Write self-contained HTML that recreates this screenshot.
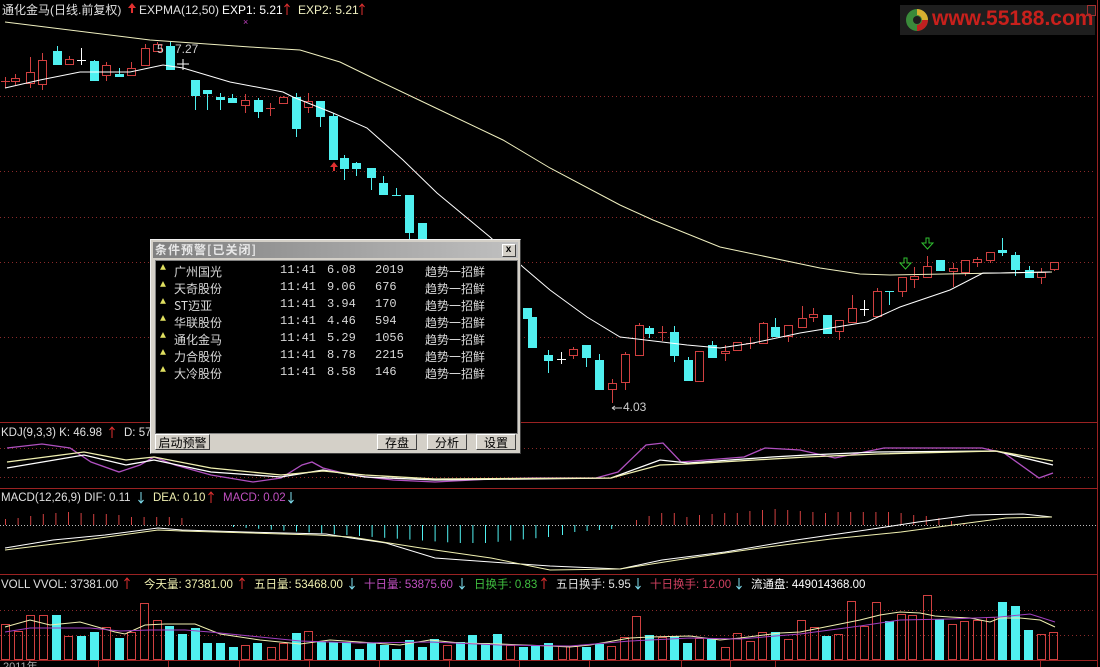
<!DOCTYPE html>
<html><head><meta charset="utf-8">
<style>
html,body{margin:0;padding:0;background:#000;overflow:hidden}
#w{position:relative;width:1100px;height:667px;background:#000;font-family:"Liberation Sans","Noto Sans CJK SC",sans-serif}
svg{position:absolute;left:0;top:0}
.dlg{position:absolute;left:150px;top:239px;width:371px;height:215px;background:#d4d0c8;border:1px solid #f0f0f0;border-right-color:#404040;border-bottom-color:#404040;box-sizing:border-box}
.tt{position:absolute;left:2px;top:2px;right:2px;height:16px;background:linear-gradient(90deg,#808080,#c0c0c0);color:#e8e8e8;font:bold 12px "Noto Sans CJK SC",sans-serif;line-height:16px;padding-left:2px;letter-spacing:1px}
.x{position:absolute;right:2px;top:2px;width:12px;height:11px;background:#d4d0c8;border:1px solid #fff;border-right-color:#404040;border-bottom-color:#404040;font:bold 10px "Liberation Sans",sans-serif;line-height:10px;text-align:center;color:#000}
.body{position:absolute;left:4px;top:20px;width:361px;height:172px;background:#000;border:1px solid #808080}
.row{position:absolute;left:0;height:17px;font:12px "Liberation Mono","Noto Sans CJK SC",monospace;color:#d8d8d8;white-space:nowrap}
.row span{position:absolute;top:0}
.btn{position:absolute;top:194px;height:16px;background:#d4d0c8;border:1px solid #fff;border-right-color:#404040;border-bottom-color:#404040;font:12px "Noto Sans CJK SC",sans-serif;line-height:16px;text-align:center;color:#000;box-sizing:border-box}
.logo{position:absolute;left:900px;top:5px;width:195px;height:30px;background:#1e1e1e}
.logo b{position:absolute;left:32px;top:2px;font:bold 21px "Liberation Sans",sans-serif;color:#c8201c;letter-spacing:0px}
</style></head><body><div id="w">
<svg id="s" width="1100" height="667" xmlns="http://www.w3.org/2000/svg" font-family="Liberation Sans, Noto Sans CJK SC, sans-serif" font-size="12">
<g stroke="#8a2a2a" stroke-dasharray="1,3" stroke-width="1">
<line x1="0" y1="96.5" x2="1096" y2="96.5"/><line x1="0" y1="171.5" x2="1096" y2="171.5"/><line x1="0" y1="217.5" x2="1096" y2="217.5"/><line x1="0" y1="262.5" x2="1096" y2="262.5"/><line x1="0" y1="337.5" x2="1096" y2="337.5"/>
<line x1="0" y1="448.5" x2="1096" y2="448.5"/><line x1="0" y1="477.5" x2="1096" y2="477.5"/>
<line x1="0" y1="610.5" x2="1096" y2="610.5"/><line x1="0" y1="635.5" x2="1096" y2="635.5"/>
</g>
<line x1="0" y1="525.5" x2="1096" y2="525.5" stroke="#bbb" stroke-dasharray="1,2"/>
<g stroke="#9a2222" stroke-width="1">
<line x1="0" y1="422.5" x2="1098" y2="422.5"/><line x1="0" y1="488.5" x2="1098" y2="488.5"/><line x1="0" y1="574.5" x2="1098" y2="574.5"/><line x1="0" y1="660.5" x2="1098" y2="660.5"/><line x1="1097.5" y1="0" x2="1097.5" y2="667"/>
</g>
<g stroke="#9a2222"><line x1="98.5" y1="660" x2="98.5" y2="667"/><line x1="168.5" y1="660" x2="168.5" y2="667"/><line x1="239.5" y1="660" x2="239.5" y2="667"/><line x1="309.5" y1="660" x2="309.5" y2="667"/><line x1="379.5" y1="660" x2="379.5" y2="667"/><line x1="449.5" y1="660" x2="449.5" y2="667"/><line x1="519.5" y1="660" x2="519.5" y2="667"/><line x1="589.5" y1="660" x2="589.5" y2="667"/><line x1="681.5" y1="660" x2="681.5" y2="667"/><line x1="730.5" y1="660" x2="730.5" y2="667"/><line x1="775.5" y1="660" x2="775.5" y2="667"/><line x1="1040.5" y1="660" x2="1040.5" y2="667"/></g>
<text x="3" y="670" fill="#aaa" font-size="11">2011年</text>
<g id="vol"></g><g id="macd"></g><g id="cand"></g>
<polyline fill="none" stroke="#f0f0c0" stroke-width="1" points="5,22 150,40 250,47 300,50 340,62 377,80 440,110 503,140 550,168 620,205 653,220 720,247 820,268 860,274 890,275 1000,273 1052,272"/>
<polyline fill="none" stroke="#fff" stroke-width="1" points="5,88 40,80 80,72 130,72 163,65 183,68 230,82 283,92 293,97 333,113 367,128 403,160 437,193 490,237 523,267 550,290 587,317 620,337 687,345 720,348 753,343 800,333 867,322 900,307 950,290 983,273 1000,273 1050,272"/>
<polyline fill="none" stroke="#b050c0" stroke-width="1.3" points="7,448 42,444 70,448 91,462 119,472 140,465 154,457 175,465 211,475 253,482 281,478 302,465 312,462 323,468 351,475 393,480 435,482 491,479 533,478 596,478 618,472 646,445 663,443 681,462 744,457 765,448 800,450 835,458 884,448 982,448 1004,453 1039,478 1053,473"/>
<polyline fill="none" stroke="#fff" stroke-width="1.3" points="7,468 84,455 126,465 154,460 211,472 281,477 323,470 365,477 435,480 611,478 660,460 688,463 772,457 807,455 877,452 996,451 1053,465"/>
<polyline fill="none" stroke="#f0f0b0" stroke-width="1.3" points="7,462 84,452 126,460 154,457 211,468 281,475 323,471 365,475 435,479 611,478 660,465 688,464 772,459 807,457 877,454 996,451 1053,461"/>
<polyline fill="none" stroke="#fff" points="5,548 53,540 105,535 158,528 182,530 245,532 326,534 351,538 386,543 435,558 491,562 550,566 620,569 662,560 725,552 796,540 866,530 918,522 971,515 1023,514 1052,517"/>
<polyline fill="none" stroke="#f0f0b0" points="5,550 70,542 158,530 182,531 316,535 351,537 421,548 491,558 550,570 620,569 690,558 760,548 831,539 901,532 953,525 1006,518 1052,517"/>
<polyline fill="none" stroke="#f0f0b0" points="5,627 30,620 50,625 80,622 115,632 125,634 145,625 165,624 195,624 220,634 260,640 300,644 330,640 360,642 400,645 430,640 460,643 500,644 550,646 570,647 590,645 630,638 650,637 690,636 720,640 740,638 780,633 800,632 835,625 860,620 880,615 900,612 920,613 935,616 950,617 970,618 990,622 1000,618 1020,618 1040,620 1055,627"/>
<polyline fill="none" stroke="#a040c0" points="5,632 30,628 60,628 90,628 120,631 150,630 185,630 210,632 260,637 300,641 360,643 430,642 500,645 570,646 630,641 690,638 740,639 800,634 860,626 900,620 950,619 1000,617 1030,614 1055,622"/>
<text x="2" y="14" fill="#e0e0e0">通化金马(日线.前复权)</text>
<path d="M131 13 v-5 h-3 l4,-5 4,5 h-3 v5z" fill="#e03030"/>
<text x="139" y="14" fill="#e0e0e0">EXPMA(12,50)</text>
<text x="222" y="14" fill="#fff">EXP1: 5.21</text>
<path d="M287 4 v11 M284.5 7 l2.5,-3 2.5,3" stroke="#e03030" fill="none"/>
<text x="298" y="14" fill="#f0f0c0">EXP2: 5.21</text>
<path d="M362 4 v11 M359.5 7 l2.5,-3 2.5,3" stroke="#e03030" fill="none"/>
<text x="243" y="25" fill="#c040c0" font-size="9">×</text>
<text x="157" y="53" fill="#ccc">5</text><text x="175" y="53" fill="#ccc">7.27</text>
<path d="M177 64 h12 M183 59 v11" stroke="#fff"/>
<path d="M612 408 h10 M612 408 l3,-2 M612 408 l3,2" stroke="#ccc" fill="none"/><text x="623" y="411" fill="#ccc">4.03</text>
<path d="M333 171 v-4 h-3 l4,-5 4,5 h-3 v4z" fill="#e03030"/>
<path d="M900 263 h4 v-5 h3 v5 h4 l-5.5,6z M922 243 h4 v-5 h3 v5 h4 l-5.5,6z" fill="none" stroke="#30c030"/>
<text x="1" y="436" fill="#e0e0e0" font-size="11.5">KDJ(9,3,3)  K: 46.98</text>
<path d="M112 427 v11 M109.5 430 l2.5,-3 2.5,3" stroke="#e03030" fill="none"/>
<text x="124" y="436" fill="#e0e0e0" font-size="11.5">D: 57</text>
<text x="1" y="501" fill="#e0e0e0" font-size="11.5">MACD(12,26,9)  DIF: 0.11</text>
<path d="M141 492 v11 M138.5 500 l2.5,3 2.5,-3" stroke="#80e0f0" fill="none"/>
<text x="153" y="501" fill="#f0f0b0" font-size="11.5">DEA: 0.10</text>
<path d="M211 492 v11 M208.5 495 l2.5,-3 2.5,3" stroke="#e03030" fill="none"/>
<text x="223" y="501" fill="#c050c0" font-size="11.5">MACD: 0.02</text>
<path d="M291 492 v11 M288.5 500 l2.5,3 2.5,-3" stroke="#80e0f0" fill="none"/>
<text x="1" y="588" fill="#e0e0e0" font-size="11.5">VOLL  VVOL: 37381.00</text>
<path d="M127 578 v11 M124.5 581 l2.5,-3 2.5,3" stroke="#e03030" fill="none"/>
<text x="144" y="588" fill="#f0f0b0" font-size="11.5">今天量: 37381.00</text>
<path d="M242 578 v11 M239.5 581 l2.5,-3 2.5,3" stroke="#e03030" fill="none"/>
<text x="254" y="588" fill="#f0f0b0" font-size="11.5">五日量: 53468.00</text>
<path d="M352 578 v11 M349.5 586 l2.5,3 2.5,-3" stroke="#80e0f0" fill="none"/>
<text x="364" y="588" fill="#c050c0" font-size="11.5">十日量: 53875.60</text>
<path d="M462 578 v11 M459.5 586 l2.5,3 2.5,-3" stroke="#80e0f0" fill="none"/>
<text x="474" y="588" fill="#40c040" font-size="11.5">日换手: 0.83</text>
<path d="M544 578 v11 M541.5 581 l2.5,-3 2.5,3" stroke="#e03030" fill="none"/>
<text x="556" y="588" fill="#e0e0e0" font-size="11.5">五日换手: 5.95</text>
<path d="M638 578 v11 M635.5 586 l2.5,3 2.5,-3" stroke="#80e0f0" fill="none"/>
<text x="650" y="588" fill="#d04060" font-size="11.5">十日换手: 12.00</text>
<path d="M739 578 v11 M736.5 586 l2.5,3 2.5,-3" stroke="#80e0f0" fill="none"/>
<text x="751" y="588" fill="#fff" font-size="11.5">流通盘: 449014368.00</text>
</svg>
<div class="logo"><svg width="30" height="30" style="left:3px;top:1px"><circle cx="14" cy="14" r="11" fill="#3a8a3a"/><path d="M14 3 a11 11 0 0 1 11 11 l-6 0 a5 5 0 0 0 -5 -5z" fill="#d8b030"/><path d="M25 14 a11 11 0 0 1 -11 11 l0 -6 a5 5 0 0 0 5 -5z" fill="#c02020"/><circle cx="14" cy="14" r="4" fill="#1e1e1e"/></svg><b>www.55188.com</b></div>
<div style="position:absolute;left:1087px;top:5px;width:7px;height:9px;border:1px solid #a03030"></div>
<div class="dlg">
<div class="tt">条件预警[已关闭]<div class="x">x</div></div>
<div class="body" id="rows"></div>
<div class="btn" style="left:4px;width:55px">启动预警</div>
<div class="btn" style="left:226px;width:40px">存盘</div>
<div class="btn" style="left:276px;width:40px">分析</div>
<div class="btn" style="left:325px;width:40px">设置</div>
</div>
</div>
<script>
var NS="http://www.w3.org/2000/svg";
function el(p,t,a){var e=document.createElementNS(NS,t);for(var k in a)e.setAttribute(k,a[k]);p.appendChild(e);return e;}
var R="#d04040",C="#50f0f0";
var cd=[[5,81,81,77,88,'r'],[15,78,81,74,85,'r'],[30,72,83,57,88,'r'],[42,60,84,53,90,'r'],[57,51,64,46,64,'c'],[69,59,64,56,64,'r'],[81,60,60,48,65,'w'],[94,61,80,60,80,'c'],[106,65,75,62,81,'r'],[119,74,76,68,76,'c'],[131,68,75,62,75,'r'],[145,48,65,44,65,'r'],[157,44,51,42,51,'r'],[170,46,69,42,69,'c'],
[195,80,95,80,110,'c'],[207,90,93,90,110,'c'],[220,97,99,93,110,'c'],[232,98,102,94,102,'c'],[245,100,105,94,113,'r'],[258,100,111,98,118,'c'],[270,108,108,103,116,'r'],[283,97,103,96,103,'r'],[296,97,128,93,137,'c'],[308,101,107,93,113,'r'],[320,101,116,101,127,'c'],[333,116,159,113,159,'c'],[344,158,168,155,180,'c'],[356,163,168,162,176,'c'],[371,168,177,168,190,'c'],[383,183,194,176,194,'c'],[396,195,195,188,196,'c'],[409,195,232,195,245,'c'],[422,223,245,223,245,'c'],
[527,308,318,308,318,'c'],[532,317,347,317,347,'c'],[548,355,360,350,373,'c'],[561,359,359,352,364,'w'],[573,349,355,347,359,'r'],[586,345,357,345,367,'c'],[599,360,389,354,390,'c'],[612,383,389,379,403,'r'],[625,354,382,352,390,'r'],[639,325,355,323,355,'r'],[649,328,333,326,338,'c'],[662,332,332,326,341,'r'],[674,332,355,326,362,'c'],[688,360,380,357,380,'c'],[699,351,381,351,381,'r'],[712,345,357,341,358,'c'],[725,351,353,345,361,'r'],[737,342,350,342,351,'r'],[750,343,343,337,349,'r'],[763,323,343,322,344,'r'],[775,327,336,318,336,'c'],[788,325,336,325,342,'r'],[802,318,327,306,327,'r'],[813,314,317,308,322,'r'],[827,315,333,315,334,'c'],[839,320,331,320,340,'r'],[852,308,322,295,323,'r'],[864,309,309,300,316,'w'],[877,291,316,288,316,'r'],[889,291,291,291,305,'c'],[902,277,291,277,297,'r'],[914,276,279,267,288,'r'],[927,266,277,256,277,'r'],[940,260,270,260,271,'c'],[953,268,271,263,287,'r'],[965,260,272,260,276,'r'],[977,259,262,257,267,'r'],[990,252,260,252,263,'r'],[1002,250,252,238,256,'c'],[1015,255,269,252,276,'c'],[1029,270,277,266,277,'c'],[1041,272,277,268,284,'r'],[1054,262,269,262,271,'r']];
var g=document.getElementById('cand');
cd.forEach(function(c){var x=c[0],col=c[5]=='r'?R:c[5]=='c'?C:'#fff';
 el(g,'line',{x1:x+.5,y1:c[3],x2:x+.5,y2:c[4],stroke:col});
 if(c[1]==c[2]){el(g,'line',{x1:x-4,y1:c[1]+.5,x2:x+5,y2:c[1]+.5,stroke:col});}
 else if(c[5]=='r'){el(g,'rect',{x:x-3.5,y:c[1]+.5,width:8,height:c[2]-c[1],fill:'#000',stroke:R});}
 else el(g,'rect',{x:x-4,y:c[1],width:9,height:c[2]-c[1]+1,fill:col});
});
var vb=[[1,624,'r'],[14,631,'r'],[26,615,'r'],[39,615,'r'],[52,615,'c'],[64,636,'r'],[77,636,'c'],[90,632,'c'],[102,627,'r'],[115,638,'c'],[127,632,'r'],[140,603,'r'],[153,620,'r'],[165,626,'c'],[178,634,'c'],[191,628,'c'],[203,643,'c'],[216,643,'c'],[229,647,'c'],[241,645,'r'],[253,643,'c'],[267,647,'r'],[279,643,'r'],[292,633,'c'],[304,631,'r'],[317,642,'c'],[329,642,'c'],[342,642,'c'],[355,649,'c'],[367,643,'c'],[380,645,'c'],[392,649,'c'],[405,640,'c'],[418,647,'c'],[430,639,'c'],[443,645,'r'],[456,642,'c'],[468,635,'c'],[481,643,'c'],[493,634,'c'],[506,645,'r'],[519,647,'c'],[531,646,'c'],[544,643,'c'],[558,646,'r'],[569,646,'r'],[582,647,'c'],[595,644,'c'],[607,646,'r'],[620,637,'r'],[632,616,'r'],[645,635,'c'],[658,637,'r'],[670,636,'c'],[683,643,'c'],[695,638,'r'],[707,639,'c'],[721,647,'r'],[733,633,'r'],[746,641,'r'],[758,632,'r'],[771,632,'c'],[784,639,'r'],[797,620,'r'],[810,627,'r'],[822,636,'c'],[834,634,'r'],[847,601,'r'],[860,626,'r'],[872,602,'r'],[885,621,'c'],[897,614,'r'],[908,615,'r'],[923,595,'r'],[935,619,'c'],[948,624,'r'],[960,621,'r'],[973,620,'r'],[986,617,'r'],[998,602,'c'],[1011,606,'c'],[1024,630,'c'],[1037,634,'r'],[1049,632,'r']];
var v=document.getElementById('vol');
vb.forEach(function(b){if(b[2]=='r')el(v,'rect',{x:b[0]+.5,y:b[1]+.5,width:8,height:659-b[1],fill:'none',stroke:R});else el(v,'rect',{x:b[0],y:b[1],width:9,height:660-b[1],fill:C});});
var m=document.getElementById('macd');
var rt=[519,518,516,514,513,512,513,514,514,515,517,517,517,517,518];
rt.forEach(function(t,i){var x=5+i*12.6;el(m,'line',{x1:x+.5,y1:t,x2:x+.5,y2:525,stroke:R});});
for(var i=0;i<26;i++){var x=233+i*12.6;var b=527+Math.min(16,i*0.9);if(i>20)b=543-(i-20)*1.2;el(m,'line',{x1:x+.5,y1:525,x2:x+.5,y2:b,stroke:C});}
[535,532,531,530,529].forEach(function(b,i){var x=562+i*12.3;el(m,'line',{x1:x+.5,y1:525,x2:x+.5,y2:b,stroke:C});});
var rt2=[520,516,513,513,517,515,514,513,513,511,510,509,510,511,512,513,512,512,512,512,512,513,515,516,518,521,523];
rt2.forEach(function(t,i){var x=636+i*12.6;el(m,'line',{x1:x+.5,y1:t,x2:x+.5,y2:525,stroke:R});});
var rows=[["广州国光","6.08","2019"],["天奇股份","9.06","676"],["ST迈亚","3.94","170"],["华联股份","4.46","594"],["通化金马","5.29","1056"],["力合股份","8.78","2215"],["大冷股份","8.58","146"]];
var rc=document.getElementById('rows');
rows.forEach(function(r,i){var d=document.createElement('div');d.className='row';d.style.top=(i*17+2)+'px';
d.innerHTML='<span style="left:4px;color:#e0e060;font-size:10px">&#9650;</span><span style="left:18px;font-family:\'Noto Sans CJK SC\',sans-serif">'+r[0]+'</span><span style="left:124px">11:41</span><span style="left:171px">'+r[1]+'</span><span style="left:219px">'+r[2]+'</span><span style="left:269px;font-family:\'Noto Sans CJK SC\',sans-serif">趋势一招鲜</span>';rc.appendChild(d);});
</script>
</body></html>
